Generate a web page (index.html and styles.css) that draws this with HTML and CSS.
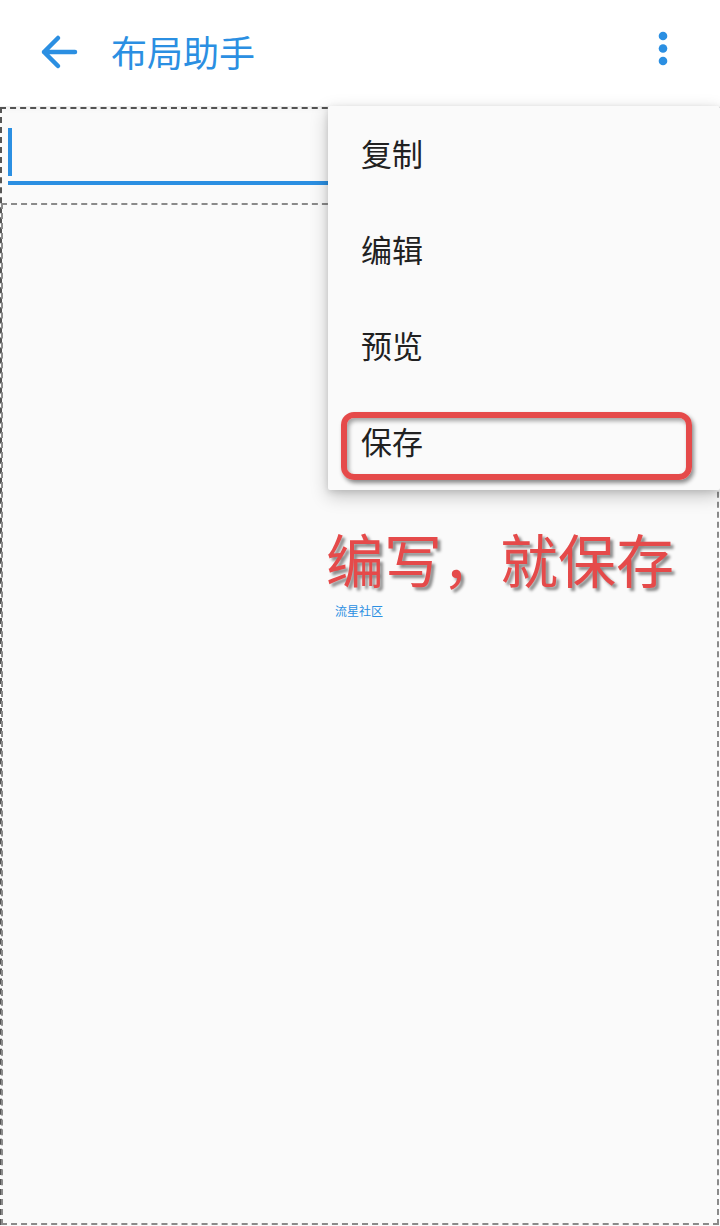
FILE: index.html
```html
<!DOCTYPE html>
<html lang="zh-CN">
<head>
    <meta charset="UTF-8">
    <meta name="viewport" content="width=device-width, initial-scale=1.0">
    <title>布局助手</title>
    <link rel="stylesheet" href="styles.css">
</head>
<body>
    <header class="app-bar">
        <svg class="back-icon" width="40" height="36" viewBox="0 0 40 36">
            <path d="M6 18H37M20 4L6 18L20 32" fill="none" stroke="#2b8fe2" stroke-width="4.5" stroke-linecap="round" stroke-linejoin="round"/>
        </svg>
        <h1 class="title">布局助手</h1>
        <svg class="more-icon" width="12" height="36" viewBox="0 0 12 36">
            <circle cx="6" cy="5" r="4.3" fill="#2b8fe2"/>
            <circle cx="6" cy="17.5" r="4.3" fill="#2b8fe2"/>
            <circle cx="6" cy="30" r="4.3" fill="#2b8fe2"/>
        </svg>
    </header>

    <main class="canvas">
        <div class="edit-row">
            <div class="edit-field">
                <span class="cursor"></span>
            </div>
        </div>
        <div class="inner-box"></div>
    </main>

    <!-- overflow menu -->
    <ul class="popup-menu">
        <li>复制</li>
        <li>编辑</li>
        <li>预览</li>
        <li>保存</li>
    </ul>

    <!-- annotations drawn over the screenshot -->
    <div class="mark-box"></div>
    <div class="mark-text">编写，就保存</div>
    <div class="watermark">流星社区</div>
</body>
</html>
```

FILE: styles.css
```css
:root {
    --blue: #2b8fe2;
    --red: #e54a4a;
    --page: #fafafa;
}

* {
    box-sizing: border-box;
}

body {
    margin: 0;
    width: 720px;
    height: 1226px;
    overflow: hidden;
    position: relative;
    background: var(--page);
    font-family: "Noto Sans CJK SC", "Noto Sans", sans-serif;
}

.app-bar {
    height: 106px;
    background: #fff;
    display: flex;
    align-items: center;
    padding: 0 0 0 38px;
    box-shadow: 0 2px 6px rgba(0,0,0,0.06);
    position: relative;
    z-index: 1;
}

.back-icon {
    margin-top: -3px;
}

.title {
    margin: -4px 0 0 33px;
    font-size: 36px;
    font-weight: 400;
    color: var(--blue);
    line-height: 1;
    flex: 1;
}

.more-icon {
    margin-right: 51px;
    margin-top: -8px;
}

.canvas {
    height: 1118px;
    border-top: 2px dashed #555;
    border-left: 2px dashed #555;
    display: flex;
    flex-direction: column;
    margin-top: 1px;
}

.edit-row {
    height: 94px;
    padding: 19px 0 0 6px;
}

.edit-field {
    height: 57px;
    border-bottom: 4px solid var(--blue);
}

.cursor {
    display: block;
    width: 4px;
    height: 48px;
    background: var(--blue);
}

.inner-box {
    flex: 1;
    margin-left: -1px;
    margin-right: 1px;
    border: 2px dashed #8a8a8a;
}

.popup-menu {
    position: absolute;
    left: 328px;
    top: 106px;
    width: 392px;
    height: 384px;
    margin: 0;
    padding: 0;
    list-style: none;
    background: #fafafa;
    border-radius: 2px;
    box-shadow: 0 6px 18px rgba(0,0,0,0.22), 0 2px 6px rgba(0,0,0,0.12);
    z-index: 2;
}

.popup-menu li {
    height: 96px;
    display: flex;
    align-items: center;
    padding-left: 33px;
    padding-bottom: 4px;
    font-size: 31px;
    color: #212121;
}

.mark-box {
    position: absolute;
    left: 341px;
    top: 412px;
    width: 351px;
    height: 68px;
    border: 6px solid var(--red);
    border-radius: 13px;
    box-shadow: 2px 3px 4px rgba(0,0,0,0.45), inset 2px 3px 4px rgba(0,0,0,0.35);
    z-index: 3;
}

.mark-text {
    position: absolute;
    left: 326px;
    top: 527px;
    font-size: 58px;
    line-height: 1.1;
    color: var(--red);
    text-shadow: 3px 3px 3px rgba(0,0,0,0.45);
    z-index: 3;
}

.watermark {
    position: absolute;
    left: 335px;
    top: 604px;
    font-size: 12px;
    line-height: 1.2;
    color: var(--blue);
    z-index: 3;
}
```
